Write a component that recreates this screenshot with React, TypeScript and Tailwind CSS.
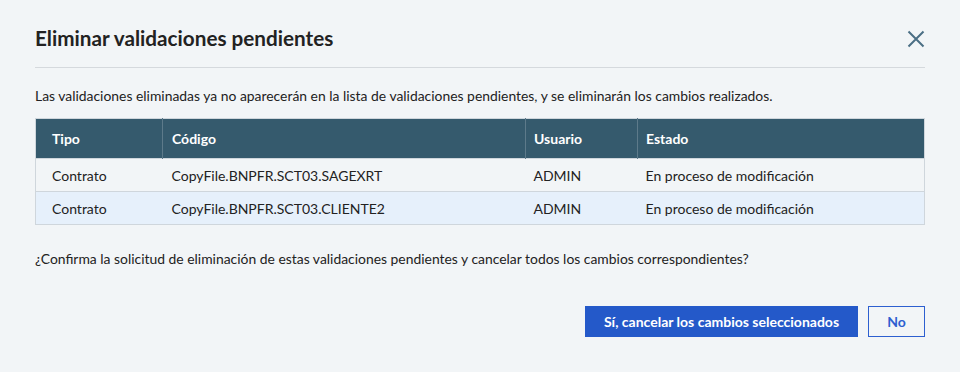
const rows = [
  { tipo: 'Contrato', codigo: 'CopyFile.BNPFR.SCT03.SAGEXRT', usuario: 'ADMIN', estado: 'En proceso de modificación' },
  { tipo: 'Contrato', codigo: 'CopyFile.BNPFR.SCT03.CLIENTE2', usuario: 'ADMIN', estado: 'En proceso de modificación' },
]

export default function App() {
  return (
    <div
      className="w-[960px] h-[372px] bg-[#f2f5f7] px-[35px] text-[#222222] overflow-hidden"
      style={{ fontFamily: "Lato, 'Open Sans', sans-serif" }}
    >
      {/* header */}
      <div className="flex items-center justify-between h-[68px] pt-[11px] border-b border-[#d5d9dd]">
        <h2 className="text-[20.7px] font-bold text-[#222222]">Eliminar validaciones pendientes</h2>
        <button className="w-[18px] h-[18px] flex items-center justify-center text-[#4b6f85]">
          <svg width="18" height="18" viewBox="0 0 18 18" fill="none" stroke="currentColor" strokeWidth="2">
            <path d="M1.5 1.5 L16.5 16.5 M16.5 1.5 L1.5 16.5" />
          </svg>
        </button>
      </div>

      <p className="text-[13.9px] mt-[18px] leading-[20px]">
        Las validaciones eliminadas ya no aparecerán en la lista de validaciones pendientes, y se eliminarán los cambios realizados.
      </p>

      {/* table */}
      <table className="w-full mt-[12px] border border-[#cfd6dc] border-collapse text-[14px]">
        <thead>
          <tr className="bg-[#355a6d] text-white h-[40px]">
            <th className="w-[127px] text-left font-bold pl-[16px] border-r border-[#5d7a8a]">Tipo</th>
            <th className="w-[363px] text-left font-bold pl-[9px] border-r border-[#5d7a8a]">Código</th>
            <th className="w-[112px] text-left font-bold pl-[8px] border-r border-[#5d7a8a]">Usuario</th>
            <th className="text-left font-bold pl-[8px]">Estado</th>
          </tr>
        </thead>
        <tbody>
          {rows.map((r, i) => (
            <tr
              key={i}
              className={`h-[33px] border-t border-[#cfd6dc] ${i % 2 === 1 ? 'bg-[#e6f0fb]' : 'bg-[#f2f5f7]'}`}
            >
              <td className="pl-[16px]">{r.tipo}</td>
              <td className="pl-[9px]">{r.codigo}</td>
              <td className="pl-[8px]">{r.usuario}</td>
              <td className="pl-[8px]">{r.estado}</td>
            </tr>
          ))}
        </tbody>
      </table>

      <p className="text-[13.9px] mt-[24px] leading-[20px]">
        ¿Confirma la solicitud de eliminación de estas validaciones pendientes y cancelar todos los cambios correspondientes?
      </p>

      {/* actions */}
      <div className="flex justify-end gap-[10px] mt-[37px]">
        <button className="h-[31px] w-[273px] bg-[#2459c9] text-white text-[14px] font-bold">
          Sí, cancelar los cambios seleccionados
        </button>
        <button className="h-[31px] w-[57px] border border-[#2d5fd0] text-[#2d5fd0] text-[14px] font-bold">
          No
        </button>
      </div>
    </div>
  )
}
